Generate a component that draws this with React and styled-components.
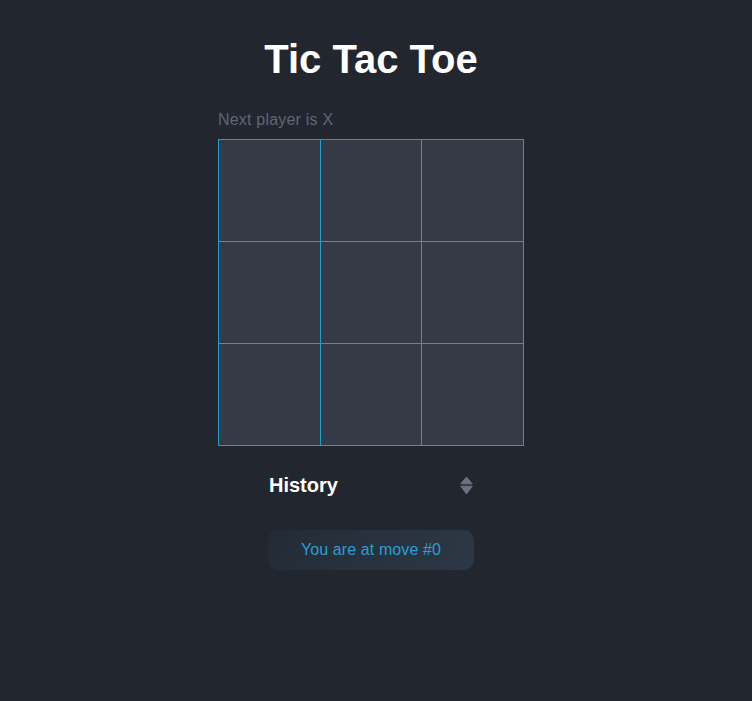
import React, { useState } from "react";
import styled, { createGlobalStyle } from "styled-components";

const GlobalStyle = createGlobalStyle`
  body {
    margin: 0;
    background: #22262e;
    font-family: "Liberation Sans", Arial, sans-serif;
  }
`;

const Page = styled.main`
  width: calc(100% - 10px);
  min-height: 701px;
  display: flex;
  flex-direction: column;
  align-items: center;
`;

const Title = styled.h1`
  margin: 0;
  padding-top: 36px;
  font-size: 40px;
  line-height: 46px;
  font-weight: 700;
  color: #ffffff;
`;

const Game = styled.section`
  width: 306px;
  margin-top: 29px;
`;

const Status = styled.div`
  font-size: 16px;
  line-height: 18px;
  letter-spacing: 0.2px;
  color: #5f6776;
  margin-bottom: 10px;
`;

const Board = styled.div`
  box-sizing: border-box;
  width: 306px;
  height: 307px;
  display: grid;
  grid-template-columns: repeat(3, 1fr);
  grid-template-rows: repeat(3, 1fr);
  gap: 1px;
  border: 1px solid #1f9fd0;
  background: #1f9fd0;
`;

const Square = styled.button`
  border: 0;
  padding: 0;
  background: #343a46;
  color: #ffffff;
  font-family: inherit;
  font-size: 48px;
  font-weight: 700;
  cursor: pointer;
`;

const History = styled.section`
  width: 206px;
  margin-top: 28px;
`;

const HistoryHeader = styled.div`
  display: flex;
  align-items: center;
  justify-content: space-between;
  height: 23px;
`;

const HistoryTitle = styled.h2`
  margin: 0 0 0 1px;
  font-size: 20px;
  line-height: 23px;
  font-weight: 700;
  color: #ffffff;
`;

const SortButton = styled.button`
  display: flex;
  border: 0;
  padding: 0;
  margin-right: 1px;
  background: none;
  cursor: pointer;
`;

const MoveList = styled.ol`
  list-style: none;
  margin: 33px 0 0;
  padding: 0;
`;

const MoveItem = styled.li`
  box-sizing: border-box;
  height: 40px;
  display: flex;
  align-items: center;
  justify-content: center;
  border-radius: 10px;
  background: linear-gradient(120deg, #232b35 0%, #28323e 50%, #2c3846 100%);
  font-size: 16px;
  letter-spacing: 0.1px;
  color: #2a9fd6;
`;

const SortIcon = () => (
  <svg width="13" height="19" viewBox="0 0 13 19">
    <path
      d="M6.5 1 L12.2 7.8 L0.8 7.8 Z M0.8 10.2 L12.2 10.2 L6.5 18 Z"
      fill="#6b7280"
      stroke="#6b7280"
      strokeWidth="1"
      strokeLinejoin="round"
    />
  </svg>
);

export default function App() {
  const [squares, setSquares] = useState(Array(9).fill(null));
  const [xIsNext, setXIsNext] = useState(true);

  const play = (i) => {
    if (squares[i]) return;
    const next = squares.slice();
    next[i] = xIsNext ? "X" : "O";
    setSquares(next);
    setXIsNext(!xIsNext);
  };

  const moves = squares.filter(Boolean).length;

  return (
    <>
      <GlobalStyle />
      <Page>
        <Title>Tic Tac Toe</Title>
        <Game>
          <Status>Next player is {xIsNext ? "X" : "O"}</Status>
          <Board>
            {squares.map((value, i) => (
              <Square key={i} onClick={() => play(i)}>
                {value}
              </Square>
            ))}
          </Board>
        </Game>
        <History>
          <HistoryHeader>
            <HistoryTitle>History</HistoryTitle>
            <SortButton aria-label="Sort moves">
              <SortIcon />
            </SortButton>
          </HistoryHeader>
          <MoveList>
            <MoveItem>You are at move #{moves}</MoveItem>
          </MoveList>
        </History>
      </Page>
    </>
  );
}
